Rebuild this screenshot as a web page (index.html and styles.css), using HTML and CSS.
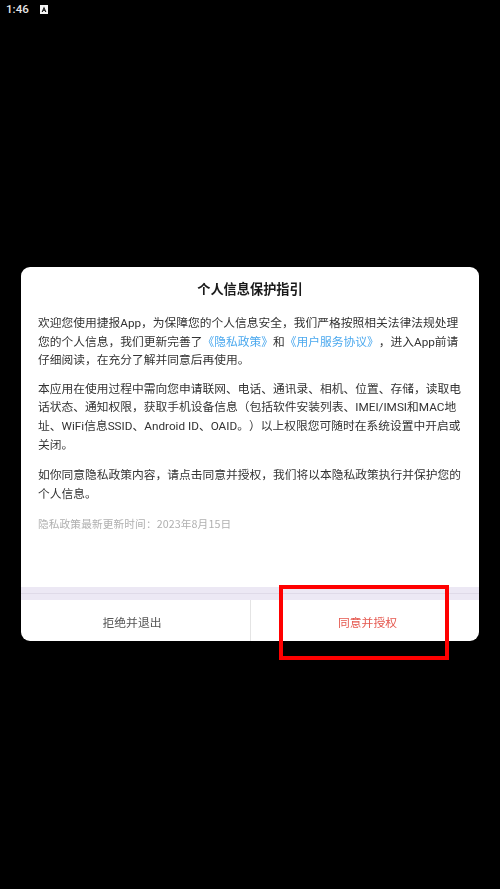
FILE: index.html
```html
<!DOCTYPE html>
<html lang="zh-CN">
<head>
<meta charset="utf-8">
<title>个人信息保护指引</title>
<link rel="stylesheet" href="styles.css">
</head>
<body>
<div class="status">
  <span class="time">1:46</span>
  <span class="badge">
    <svg viewBox="0 0 8 9" width="8" height="9"><rect width="8" height="9" fill="#f4f4f4"/><path d="M4 1.6 1.6 7h1.2L4 4.3 5.2 7h1.2z" fill="#111"/><rect x="3" y="5.2" width="2" height=".8" fill="#111"/></svg>
  </span>
</div>
<main class="stage">
  <section class="card">
    <div class="body">
      <h1 class="title">个人信息保护指引</h1>
      <p class="para intro">欢迎您使用捷报App，为保障您的个人信息安全，我们严格按照相关法律法规处理您的个人信息，我们更新完善了<a class="link">《隐私政策》</a>和<a class="link">《用户服务协议》</a>，进入App前请仔细阅读，在充分了解并同意后再使用。</p>
      <p class="para perms">本应用在使用过程中需向您申请联网、电话、通讯录、相机、位置、存储，读取电话状态、通知权限，获取手机设备信息（包括软件安装列表、IMEI/IMSI和MAC地址、WiFi信息SSID、Android ID、OAID。）以上权限您可随时在系统设置中开启或关闭。</p>
      <p class="para">如你同意隐私政策内容，请点击同意并授权，我们将以本隐私政策执行并保护您的个人信息。</p>
      <p class="updated">隐私政策最新更新时间：2023年8月15日</p>
    </div>
    <div class="band"></div>
    <div class="actions">
      <div class="action decline">拒绝并退出</div>
      <div class="action agree">同意并授权</div>
    </div>
  </section>
</main>
<div class="highlight"></div>
</body>
</html>
```
FILE: styles.css
```css
* { box-sizing: border-box; }
html, body { margin: 0; height: 100%; }
body {
  position: relative;
  width: 500px;
  height: 889px;
  overflow: hidden;
  background: #000;
  display: flex;
  flex-direction: column;
  font-family: "Noto Sans CJK SC", "Liberation Sans", sans-serif;
  text-spacing-trim: space-all;
}
.status {
  height: 19px;
  flex: none;
  display: flex;
  align-items: center;
  gap: 11px;
  padding-left: 6px;
  color: #e6e6e6;
}
.time { font: 500 11.6px/19px Roboto, sans-serif; }
.badge { display: flex; }
.stage {
  flex: 1;
  display: flex;
  align-items: center;
  justify-content: center;
}
.card {
  width: 458px;
  height: 374px;
  background: #fff;
  border-radius: 9px;
  overflow: hidden;
  display: flex;
  flex-direction: column;
}
.body {
  flex: 1;
  padding: 13px 17px 0;
  filter: blur(0.3px);
}
.title {
  margin: 0 0 16px;
  text-align: center;
  font-size: 13.2px;
  line-height: 18px;
  font-weight: 700;
  color: #1a1a1a;
}
.para {
  margin: 0 0 11px;
  font-family: Roboto, "Noto Sans CJK SC", sans-serif;
  font-size: 11.75px;
  line-height: 18.6px;
  color: #333;
}
.intro { margin-bottom: 10px; }
.perms { margin-bottom: 12px; }
.link { color: #4aa8ee; }
.updated {
  margin: 13px 0 0;
  font-size: 10.7px;
  letter-spacing: 0.1px;
  line-height: 16px;
  color: #b0b0b0;
}
.band {
  flex: none;
  height: 13px;
  background: linear-gradient(#ece8f4 0 6px, #dfdae8 6px 7px, #ece8f4 7px);
}
.actions {
  flex: none;
  height: 41px;
  display: flex;
}
.action {
  width: 50%;
  display: flex;
  align-items: center;
  justify-content: center;
  padding-top: 2px;
  font-size: 11.8px;
  color: #555;
  filter: blur(0.3px);
}
.decline { padding-right: 7px; }
.agree {
  padding-left: 5px;
  border-left: 1px solid #e4e4e4;
  color: #e5584f;
}
.highlight {
  position: absolute;
  left: 279px;
  top: 585px;
  width: 170px;
  height: 75px;
  border: 4px solid #f00;
}
```
